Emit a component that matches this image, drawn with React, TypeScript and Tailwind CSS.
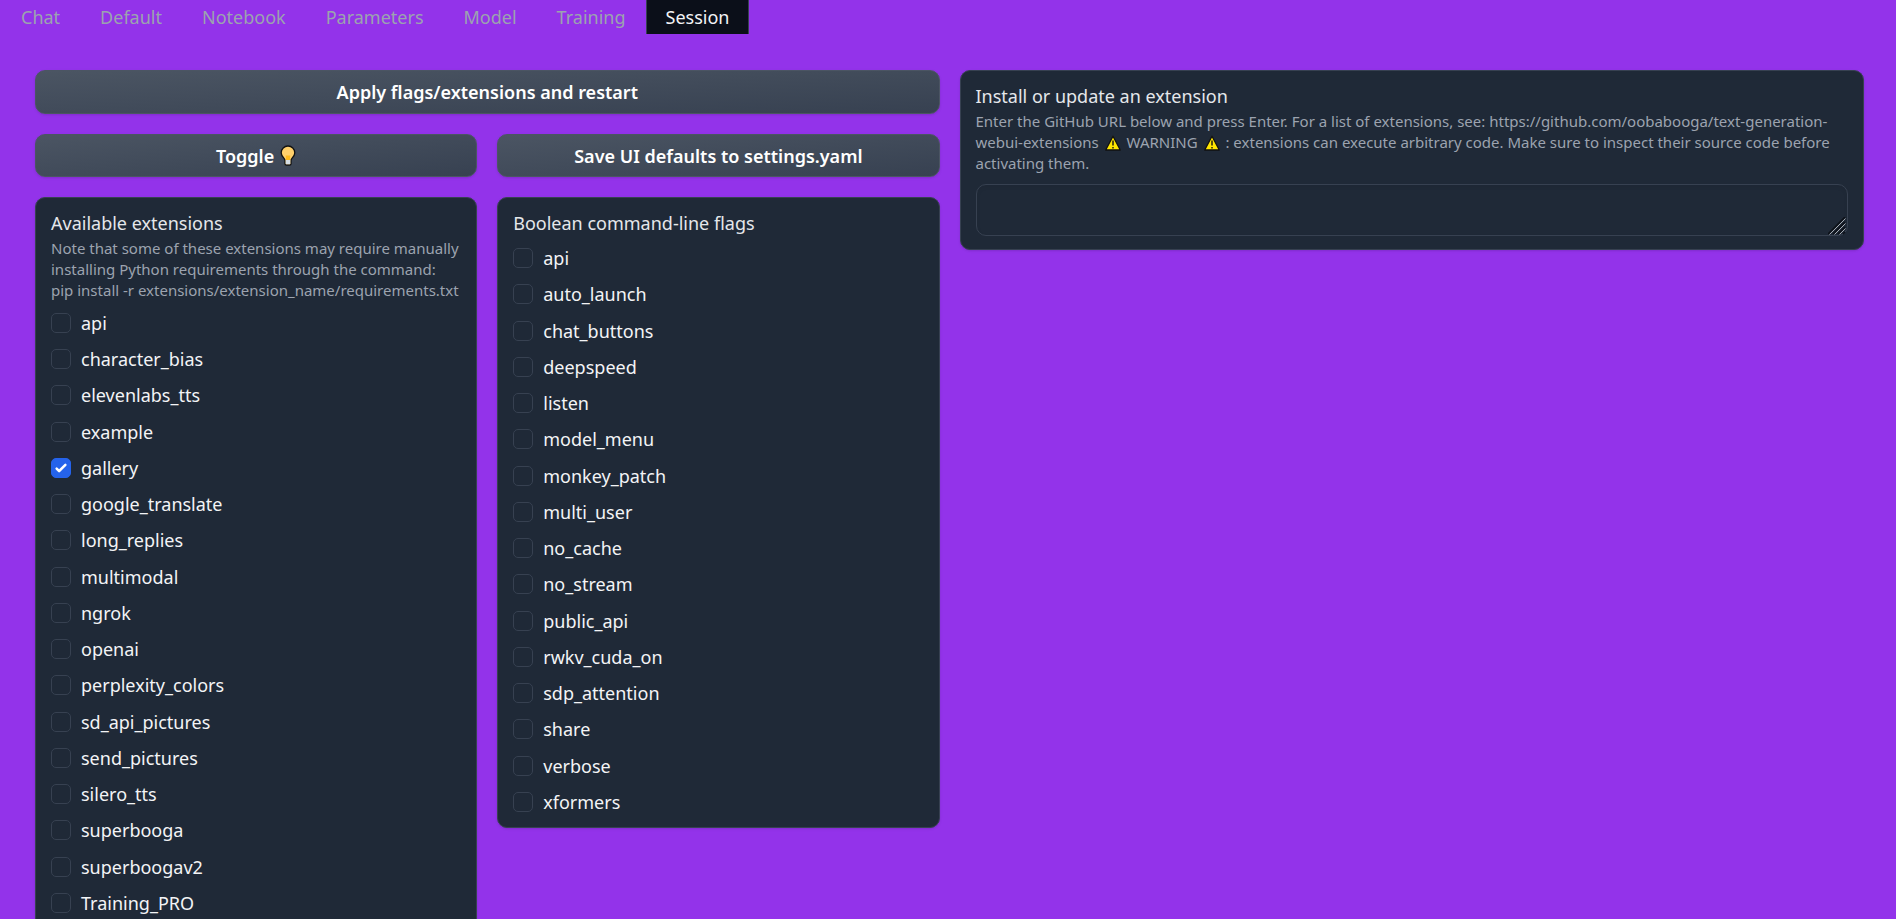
import { useState } from "react";
import type { ReactNode } from "react";

const tabs = ["Chat", "Default", "Notebook", "Parameters", "Model", "Training", "Session"];

const extensions = [
  "api", "character_bias", "elevenlabs_tts", "example", "gallery", "google_translate",
  "long_replies", "multimodal", "ngrok", "openai", "perplexity_colors", "sd_api_pictures",
  "send_pictures", "silero_tts", "superbooga", "superboogav2", "Training_PRO",
];

const flags = [
  "api", "auto_launch", "chat_buttons", "deepspeed", "listen", "model_menu", "monkey_patch",
  "multi_user", "no_cache", "no_stream", "public_api", "rwkv_cuda_on", "sdp_attention",
  "share", "verbose", "xformers",
];

function Bulb() {
  return (
    <svg viewBox="0 0 16 21" className="h-[21px] w-4" aria-hidden="true">
      <path
        d="M8 1a6.7 6.7 0 0 0-6.8 6.7c0 2.500 1.300 3.900 2.500 5.200.8.9 1.200 1.600 1.300 2.600v3.200c0 .8.7 1.300 1.400 1.300h3.200c.7 0 1.400-.5 1.400-1.300v-3.200c.1-1 .5-1.700 1.300-2.600 1.200-1.300 2.500-2.700 2.500-5.200A6.700 6.700 0 0 0 8 1z"
        fill="#ffd06b"
        stroke="#111"
        strokeWidth="1.300"
      />
      <path d="M5.700 10.500h4.600l-.3 4.500H6z" fill="#fcb91f" />
      <path d="M5.700 15h4.600v3.800c0 .3-.3.5-.6.5H6.300c-.3 0-.6-.2-.6-.5z" fill="#d5dde4" />
    </svg>
  );
}

function Warning() {
  return (
    <svg viewBox="0 0 20 16" className="inline-block h-4 w-5 align-[-3px]" aria-hidden="true">
      <path d="M10 1.200 17.300 15H2.700z" fill="#ffe600" stroke="#111" strokeWidth="1.300" strokeLinejoin="round" />
      <path d="M10 5.500v5M10 12v1.600" stroke="#111" strokeWidth="1.400" />
    </svg>
  );
}

function ActionButton({ children, className = "" }: { children: ReactNode; className?: string }) {
  return (
    <button
      type="button"
      className={`flex flex-1 items-center justify-center gap-1.5 rounded-[10px] border border-[#4b5563] bg-linear-to-br from-[#4b5563] to-[#374151] text-[18px] leading-6 font-semibold text-white shadow-sm ${className}`}
    >
      {children}
    </button>
  );
}

function Option({ label, checked, onChange }: { label: string; checked: boolean; onChange: () => void }) {
  return (
    <label className="flex items-start gap-[10px] text-[18px] leading-[22px] text-[#f3f4f6]">
      <span className="relative mt-px flex size-5 shrink-0">
        <input
          type="checkbox"
          checked={checked}
          onChange={onChange}
          className="size-5 appearance-none rounded-[5px] border border-[#374151] bg-[#1f2937] checked:border-[#2563eb] checked:bg-[#2563eb]"
        />
        {checked && (
          <svg viewBox="0 0 16 16" className="pointer-events-none absolute inset-0 size-5" fill="#fff" aria-hidden="true">
            <path d="M12.207 4.793a1 1 0 0 1 0 1.414l-5 5a1 1 0 0 1-1.414 0l-2-2a1 1 0 0 1 1.414-1.414L6.500 9.086l4.293-4.293a1 1 0 0 1 1.414 0z" />
          </svg>
        )}
      </span>
      {label}
    </label>
  );
}

function Options({ names, initial, className }: { names: string[]; initial: string[]; className: string }) {
  const [selected, setSelected] = useState(initial);
  const toggle = (name: string) =>
    setSelected((now) => (now.includes(name) ? now.filter((n) => n !== name) : [...now, name]));
  return (
    <div className={`grid auto-rows-fr ${className}`}>
      {names.map((name) => (
        <Option key={name} label={name} checked={selected.includes(name)} onChange={() => toggle(name)} />
      ))}
    </div>
  );
}

const panel = "min-w-0 rounded-[10px] border border-[#374151] bg-[#1f2937] px-[15px] pt-[14px] shadow-sm";
const title = "block text-[18px] leading-[22px] text-[#e5e7eb]";
const info = "pt-1 text-[15px] leading-[21px] text-[#9ca3af]";

export default function App() {
  const [active, setActive] = useState("Session");
  return (
    <div className="h-screen overflow-x-hidden overflow-y-auto bg-[#9333ea] font-['Noto_Sans',sans-serif] [scrollbar-width:none]">
      <nav className="flex h-[34px] pl-px">
        {tabs.map((tab) => (
          <button
            key={tab}
            type="button"
            onClick={() => setActive(tab)}
            className={`border-x px-[19px] text-[18px] leading-[34px] ${
              tab === active ? "border-[#374151] bg-[#0b0f19] text-[#f3f4f6]" : "border-transparent text-[#9ca3af]"
            }`}
          >
            {tab}
          </button>
        ))}
      </nav>
      <main className="grid grid-cols-2 items-start gap-5 pt-9 pr-8 pl-[35px]">
        <div className="flex flex-col gap-5">
          <div className="flex">
            <ActionButton className="h-11">Apply flags/extensions and restart</ActionButton>
          </div>
          <div className="grid grid-cols-2 gap-5">
            <ActionButton className="h-[43px]">
              Toggle <Bulb />
            </ActionButton>
            <ActionButton className="h-[43px]">Save UI defaults to settings.yaml</ActionButton>
          </div>
          <div className="grid grid-cols-2 items-start gap-5">
            <section className={`${panel} pb-8`}>
              <h2 className={title}>Available extensions</h2>
              <p className={info}>
                Note that some of these extensions may require manually installing Python requirements through the
                command: pip install -r extensions/extension_name/requirements.txt
              </p>
              <Options names={extensions} initial={["gallery"]} className="mt-[11px] min-h-[616px]" />
            </section>
            <section className={panel}>
              <h2 className={title}>Boolean command-line flags</h2>
              <Options names={flags} initial={[]} className="mt-[13px] min-h-[580px]" />
            </section>
          </div>
        </div>
        <section className={`${panel} pb-[13px]`}>
          <label htmlFor="extension-url" className={title}>
            Install or update an extension
          </label>
          <p id="extension-info" className={info}>
            Enter the GitHub URL below and press Enter. For a list of extensions, see:
            https://github.com/oobabooga/text-generation-webui-extensions <Warning /> WARNING <Warning /> : extensions
            can execute arbitrary code. Make sure to inspect their source code before activating them.
          </p>
          <div className="relative mt-[10px]">
            <textarea
              id="extension-url"
              aria-describedby="extension-info"
              rows={1}
              className="block h-[52px] w-full resize-none rounded-[10px] border border-[#374151] bg-[#1f2937] p-3 text-[18px] leading-6 text-[#f3f4f6] shadow-inner"
            />
            <svg viewBox="0 0 18 18" className="pointer-events-none absolute right-0.5 bottom-px size-[18px]" fill="none" aria-hidden="true">
              <path d="M0 17 17 0M5 17 17 5M10 17l7-7M15 17l2-2" stroke="#0d1118" strokeWidth="1.500" />
              <path d="M1.500 17.500 17.500 1.500M6.500 17.500l11-11M11.500 17.500l6-6" stroke="#a5a9b0" />
            </svg>
          </div>
        </section>
      </main>
    </div>
  );
}
